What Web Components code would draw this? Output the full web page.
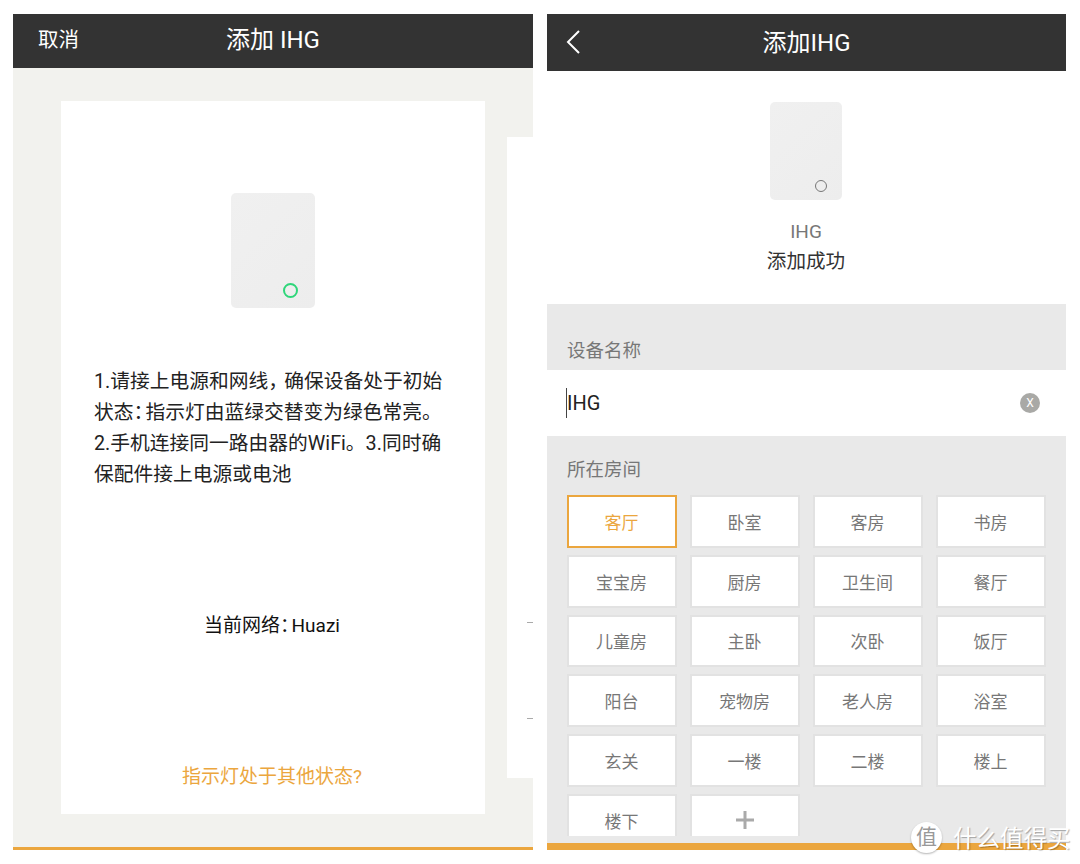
<!DOCTYPE html>
<html lang="zh">
<head>
<meta charset="utf-8">
<title>添加 IHG</title>
<style>
  html, body { margin: 0; background: #fff; }
  body {
    width: 1080px;
    height: 864px;
    overflow: hidden;
    position: relative;
    font-family: Roboto, "Noto Sans CJK SC", sans-serif;
  }
  main {
    display: flex;
    gap: 14px;
    padding: 14px 14px 14px 13px;
    box-sizing: border-box;
    height: 864px;
  }
</style>
</head>
<body>
<main>
  <add-guide></add-guide>
  <add-result></add-result>
</main>
<site-mark></site-mark>

<script>
customElements.define(
  'app-bar',
  class extends HTMLElement {
    constructor() {
      super();
      this.attachShadow({ mode: 'open' }).innerHTML = `
        <style>
          :host {
            display: grid;
            grid-template-columns: 1fr auto 1fr;
            align-items: center;
            background: #333;
            color: #fff;
            flex: none;
            height: var(--bar-height, 54px);
            padding: 0 var(--bar-pad, 25px) var(--bar-lift, 7px);
            box-sizing: border-box;
            font-size: 20.5px;
          }
          .title { font-size: 24px; }
        </style>
        <div><slot name="start"></slot></div>
        <div class="title"><slot></slot></div>
        <div></div>
      `;
    }
  }
);

customElements.define(
  'device-pic',
  class extends HTMLElement {
    constructor() {
      super();
      this.attachShadow({ mode: 'open' }).innerHTML = `
        <style>
          :host {
            display: block;
            position: relative;
            flex: none;
            background: linear-gradient(135deg, #f0f0f0, #ededed);
            border-radius: 5px;
            width: var(--w);
            height: var(--h);
          }
          i {
            position: absolute;
            right: var(--led-right);
            bottom: var(--led-bottom);
            width: var(--led);
            height: var(--led);
            border: var(--led-line, 1.5px) solid var(--led-color);
            border-radius: 50%;
            box-sizing: border-box;
          }
        </style>
        <i></i>
      `;
    }
  }
);

customElements.define(
  'add-guide',
  class extends HTMLElement {
    constructor() {
      super();
      this.attachShadow({ mode: 'open' }).innerHTML = `
        <style>
          :host {
            display: flex;
            flex-direction: column;
            width: 520px;
            height: 836px;
            background: #f2f2ee;
            border-bottom: 3px solid #eba63e;
            box-sizing: border-box;
            position: relative;
            overflow: hidden;
          }
          .card {
            flex: none;
            display: flex;
            flex-direction: column;
            align-items: center;
            background: #fff;
            width: 424px;
            height: 713px;
            margin: 33px 0 0 48px;
            box-sizing: border-box;
            padding-top: 92px;
          }
          device-pic {
            --w: 84px; --h: 115px;
            --led: 15px; --led-right: 17px; --led-bottom: 10px; --led-color: #2fd67a; --led-line: 2px;
          }
          p {
            margin: 58px 0 0;
            padding: 0 33px;
            font-size: 19.75px;
            line-height: 31px;
            color: #222;
            align-self: stretch;
            white-space: nowrap;
          }
          /* half width punctuation, the phone font sets these narrow */
          .comma { font-feature-settings: "halt"; margin-right: 6px; }
          .colon { font-feature-settings: "halt"; margin-right: 2px; }
          .net { margin: 121px 2px 0 0; padding: 0; color: #111; font-size: 19px; line-height: 30px; align-self: center; }
          .more { margin: 121px 2px 0 0; padding: 0; color: #eba63e; font-size: 19px; line-height: 30px; align-self: center; }
          .peek {
            position: absolute;
            left: 494px;
            top: 123px;
            width: 26px;
            height: 641px;
            background: #fff;
          }
          .peek b {
            position: absolute;
            left: 20px;
            width: 6px;
            height: 1px;
            background: #aaa;
          }
        </style>
        <app-bar>
          <span slot="start">取消</span>
          添加 IHG
        </app-bar>
        <div class="card">
          <device-pic></device-pic>
          <p>1.请接上电源和网线<span class="comma">，</span>确保设备处于初始<br>状态<span class="colon">：</span>指示灯由蓝绿交替变为绿色常亮。<br>2.手机连接同一路由器的WiFi。3.同时确<br>保配件接上电源或电池</p>
          <p class="net">当前网络<span class="colon">：</span>Huazi</p>
          <p class="more">指示灯处于其他状态?</p>
        </div>
        <div class="peek"><b style="top:485px"></b><b style="top:581px"></b></div>
      `;
    }
  }
);

customElements.define(
  'room-chip',
  class extends HTMLElement {
    constructor() {
      super();
      this.attachShadow({ mode: 'open' }).innerHTML = `
        <style>
          :host {
            display: flex;
            align-items: center;
            justify-content: center;
            background: #fff;
            border: 2px solid #e2e2e2;
            box-sizing: border-box;
            color: #777;
            font-size: 17px;
            height: 52.8px;
            padding-right: 1px;
          }
          :host([selected]) { border-color: #eba63e; color: #eba63e; }
        </style>
        <slot></slot>
      `;
    }
  }
);

customElements.define(
  'add-result',
  class extends HTMLElement {
    constructor() {
      super();
      const rooms = ['卧室', '客房', '书房', '宝宝房', '厨房', '卫生间', '餐厅', '儿童房', '主卧', '次卧', '饭厅', '阳台', '宠物房', '老人房', '浴室', '玄关', '一楼', '二楼', '楼上', '楼下'];
      this.attachShadow({ mode: 'open' }).innerHTML = `
        <style>
          :host {
            display: flex;
            flex-direction: column;
            width: 519px;
            height: 836px;
            background: #e9e9e9;
            border-bottom: 7px solid #eba63e;
            box-sizing: border-box;
            overflow: hidden;
          }
          app-bar { --bar-height: 57px; --bar-pad: 18px; --bar-lift: 5px; }
          .top {
            flex: none;
            height: 233px;
            background: #fff;
            display: flex;
            flex-direction: column;
            align-items: center;
            padding: 31px 1px 0 0;
            box-sizing: border-box;
          }
          device-pic {
            --w: 72px; --h: 98px;
            --led: 12px; --led-right: 15px; --led-bottom: 8px; --led-color: #777;
          }
          .name { margin-top: 20px; color: #777; font-size: 19px; line-height: 24px; }
          .done { margin-top: 3px; color: #333; font-size: 19.6px; line-height: 30px; }
          h2 {
            margin: 0;
            padding: 0 20px;
            font-weight: 400;
            font-size: 18.5px;
            line-height: 24px;
            color: #777;
          }
          .l1 { padding-top: 35px; padding-bottom: 7px; }
          .l2 { padding-top: 22px; padding-bottom: 13px; }
          .input {
            flex: none;
            height: 66px;
            background: #fff;
            display: flex;
            align-items: center;
            justify-content: space-between;
            padding: 0 26px 0 19px;
            color: #222;
            font-size: 20px;
          }
          .value { border-left: 1px solid #444; line-height: 29px; padding-top: 1px; }
          .clear {
            width: 20px;
            height: 20px;
            border-radius: 50%;
            background: #a9a9a6;
            color: #fff;
            font-size: 12px;
            display: flex;
            align-items: center;
            justify-content: center;
          }
          .grid {
            display: grid;
            grid-template-columns: repeat(4, 110px);
            grid-auto-rows: 52.8px;
            gap: 7px 13px;
            padding: 0 20px;
            height: 341px;
            overflow: hidden;
          }
          svg { display: block; }
          .back { margin-top: 4px; }
        </style>
        <app-bar>
          <svg class="back" slot="start" width="16" height="26" viewBox="0 0 16 26" fill="none" stroke="#fff" stroke-width="2"><path d="M14 2 3 13l11 11"/></svg>
          添加IHG
        </app-bar>
        <div class="top">
          <device-pic></device-pic>
          <div class="name">IHG</div>
          <div class="done">添加成功</div>
        </div>
        <h2 class="l1">设备名称</h2>
        <div class="input"><span class="value">IHG</span><span class="clear">X</span></div>
        <h2 class="l2">所在房间</h2>
        <div class="grid">
          <room-chip selected>客厅</room-chip>
          ${rooms.map((r) => `<room-chip>${r}</room-chip>`).join('')}
          <room-chip><svg width="20" height="20" viewBox="0 0 20 20" fill="none" stroke="#aaa" stroke-width="3"><path d="M10 1v18M1 10h18"/></svg></room-chip>
        </div>
      `;
    }
  }
);

customElements.define(
  'site-mark',
  class extends HTMLElement {
    constructor() {
      super();
      this.attachShadow({ mode: 'open' }).innerHTML = `
        <style>
          :host {
            position: absolute;
            left: 911px;
            top: 820px;
            display: flex;
            align-items: center;
            gap: 11px;
            color: #fff;
            text-shadow: 1px 1px 1px rgba(0, 0, 0, .3);
            font-size: 23.5px;
            white-space: nowrap;
          }
          .seal {
            width: 31px;
            height: 31px;
            border-radius: 50%;
            background: #fff;
            color: #999;
            text-shadow: none;
            font-size: 21px;
            line-height: 31px;
            text-align: center;
            box-shadow: 0 1px 2px rgba(0, 0, 0, .3);
          }
        </style>
        <span class="seal">值</span><span>什么值得买</span>
      `;
    }
  }
);
</script>
</body>
</html>
